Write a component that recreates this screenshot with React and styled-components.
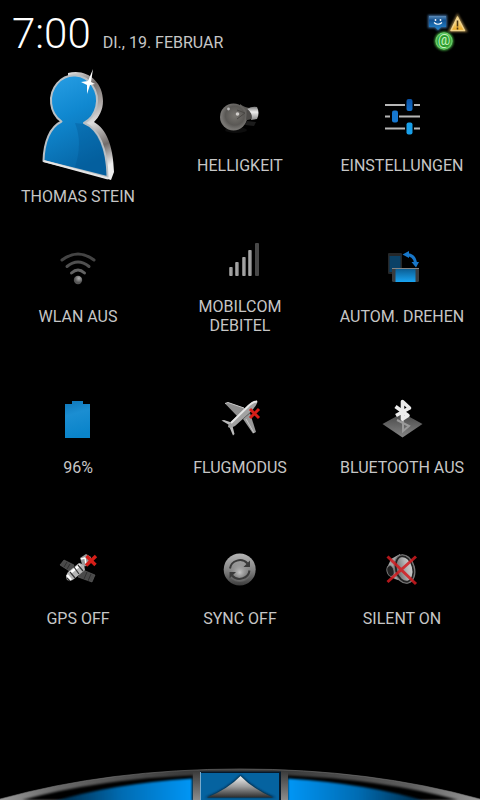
import styled, { createGlobalStyle } from "styled-components";

const GlobalStyle = createGlobalStyle`
  * {
    box-sizing: border-box;
  }

  body {
    margin: 0;
    background: #000;
    color: #c6c6c6;
    font-family: Roboto, "Liberation Sans", sans-serif;
  }
`;

const Screen = styled.div`
  display: flex;
  flex-direction: column;
  min-height: 100vh;
  overflow: hidden;
`;

const StatusBar = styled.header`
  display: flex;
  align-items: flex-start;
  justify-content: space-between;
  height: 63px;
  padding: 8px 12px 0;
`;

const Clock = styled.div`
  display: flex;
  align-items: baseline;
  gap: 12px;
`;

const Time = styled.time`
  color: #fff;
  font-size: 42px;
  font-weight: 300;
  line-height: 52px;
`;

const Day = styled.span`
  font-size: 16px;
`;

const TileGrid = styled.main`
  display: grid;
  grid-template-columns: repeat(3, 1fr);
  grid-auto-rows: 145px;
  gap: 6px;
`;

const Tile = styled.button`
  display: flex;
  flex-direction: column;
  align-items: center;
  justify-content: center;
  gap: ${(props) => (props.$large ? "6px" : "19px")};
  padding: 0;
  border: none;
  background: none;
  color: inherit;
  font-family: inherit;
  cursor: pointer;
`;

const TileIcon = styled.svg`
  flex: none;
  width: ${(props) => (props.$large ? "100px" : "40px")};
  height: ${(props) => (props.$large ? "116px" : "40px")};
  overflow: visible;
`;

const TileLabel = styled.span`
  max-width: 132px;
  font-size: 16px;
  line-height: 19px;
  text-align: center;
`;

const StatusIcons = styled.svg`
  flex: none;
  width: 42px;
  height: 40px;
  margin-top: 4px;
  overflow: visible;
`;

const Handle = styled.button`
  display: block;
  width: 100%;
  margin-top: auto;
  padding: 0;
  border: none;
  background: none;
  cursor: pointer;
`;

const HandleArt = styled.svg`
  display: block;
  width: 100%;
`;

const Notifications = () => (
  <StatusIcons viewBox="0 0 42 40" aria-hidden="true">
    <defs>
      <linearGradient id="chat" x2="0" y2="1">
        <stop offset="0" stopColor="#5d8cb8" />
        <stop offset="0.3" stopColor="#12508f" />
        <stop offset="1" stopColor="#2588d0" />
      </linearGradient>
      <linearGradient id="warn" x2="0" y2="1">
        <stop offset="0" stopColor="#fff2c0" />
        <stop offset="1" stopColor="#e9a51c" />
      </linearGradient>
      <radialGradient id="mail">
        <stop offset="0" stopColor="#3fae3f" />
        <stop offset="0.7" stopColor="#25962b" />
        <stop offset="1" stopColor="#7de07b" />
      </radialGradient>
      <filter id="glow" x="-30%" y="-30%" width="160%" height="160%">
        <feGaussianBlur stdDeviation="1" />
      </filter>
    </defs>
    <path d="M2 3h19v13h-6l-3 3-3-3H2z" fill="#3d6c9c" filter="url(#glow)" />
    <path d="M3 4h17v11h-5l-3 3-3-3H3z" fill="url(#chat)" />
    <circle cx="9.500" cy="8" r="0.900" fill="#fff" />
    <circle cx="14.500" cy="8" r="0.900" fill="#fff" />
    <path d="M8 10.500q4 3.500 8 0" fill="none" stroke="#fff" strokeWidth="1.200" />
    <path d="M31.500 3.500 40 19H23.500z" fill="#8d7442" stroke="#8d7442" strokeWidth="2" filter="url(#glow)" />
    <path d="M31.500 5 38.500 18.500H25z" fill="url(#warn)" stroke="#f0d28a" strokeWidth="1.500" strokeLinejoin="round" />
    <path d="M31.500 8.500v6M31.500 15.500v2" stroke="#4a3410" strokeWidth="1.600" />
    <circle cx="18" cy="29" r="9.500" fill="#43a940" filter="url(#glow)" />
    <circle cx="18" cy="29" r="8.500" fill="url(#mail)" />
    <text x="18" y="33" textAnchor="middle" fontSize="14" fill="#c4f2bd">@</text>
  </StatusIcons>
);

const PersonIcon = () => (
  <TileIcon $large viewBox="0 0 100 116" aria-hidden="true">
    <defs>
      <linearGradient id="personFill" x2="0.3" y2="1">
        <stop offset="0" stopColor="#2aa0e6" />
        <stop offset="0.45" stopColor="#1088d0" />
        <stop offset="1" stopColor="#0666a6" />
      </linearGradient>
      <linearGradient id="personSide" x2="0.2" y2="1">
        <stop offset="0" stopColor="#e8e8e8" />
        <stop offset="0.2" stopColor="#77706e" />
        <stop offset="0.4" stopColor="#a9a3a1" />
        <stop offset="0.55" stopColor="#dedede" />
        <stop offset="0.8" stopColor="#726c6a" />
        <stop offset="1" stopColor="#eee" />
      </linearGradient>
    </defs>
    <path
      d="M40 8C58 3 75 16 75 36c0 9-4 16-9 21 12 7 19 22 20 50l-3 8-10-3L40 60z"
      fill="url(#personSide)"
    />
    <path
      d="M15.500 96C16 77 22 62 33.500 56.500A23 25 0 1 1 56 58C71 64 79 84 79.500 112z"
      fill="url(#personFill)"
      stroke="#b9c0c5"
      strokeWidth="2"
      strokeLinejoin="round"
    />
    <path d="M47 58q8 20 0 44l31.500 9q-1-44-23-52z" fill="#00508b" opacity="0.300" />
    <path d="M15.500 96 80 113.500" fill="none" stroke="#e5e5e5" strokeWidth="2" />
    <path d="m65 4-2 13 4 2-5 1-3 9v-9l-6-3 7-1z" fill="#fff" />
  </TileIcon>
);

const BulbIcon = () => (
  <TileIcon viewBox="0 0 40 40" aria-hidden="true">
    <defs>
      <radialGradient id="glass" cx="0.55" cy="0.45">
        <stop offset="0" stopColor="#77746f" />
        <stop offset="0.7" stopColor="#5a5855" />
        <stop offset="1" stopColor="#777572" />
      </radialGradient>
      <linearGradient id="socket" x2="0" y2="1">
        <stop offset="0" stopColor="#777" />
        <stop offset="0.4" stopColor="#eee" />
        <stop offset="1" stopColor="#888" />
      </linearGradient>
    </defs>
    <ellipse cx="16" cy="33" rx="11" ry="3" fill="#0d0d0d" />
    <path d="M27 24l9 1-2 4-9-1z" fill="#1c1c1c" />
    <path d="M20 7q5 4 11 4v11q-6 0-11 8z" fill="#5b5956" />
    <circle cx="13.500" cy="20" r="13.500" fill="url(#glass)" />
    <path d="M27 12q5-3 10-2 3 6 0 12l-6 1q2-6-4-11z" fill="url(#socket)" />
    <path d="M27 12q6 4 4 10l-5 1z" fill="#4c4a48" />
    <path d="M17 13l8 3-8 6" fill="none" stroke="#494744" />
    <circle cx="8.500" cy="12" r="1.400" fill="#bbb" />
    <circle cx="17.500" cy="17" r="1.800" fill="#d0cdca" />
  </TileIcon>
);

const SlidersIcon = () => (
  <TileIcon viewBox="0 0 40 40" aria-hidden="true">
    <defs>
      <linearGradient id="knob" x2="0" y2="1">
        <stop offset="0" stopColor="#0950a4" />
        <stop offset="1" stopColor="#1270cb" />
      </linearGradient>
    </defs>
    <path d="M3 8h20M32 8h6M3 19.500h5M17 19.500h21M3 31.500h20M32 31.500h6" stroke="#b7b7b7" strokeWidth="1.800" />
    <rect x="24.500" y="2" width="6" height="12" rx="2" fill="url(#knob)" />
    <rect x="10" y="13.500" width="6" height="12" rx="2" fill="#1677cf" />
    <rect x="24.500" y="25.500" width="6" height="12" rx="2" fill="#189fe9" />
  </TileIcon>
);

const WifiIcon = () => (
  <TileIcon viewBox="0 0 40 40" aria-hidden="true">
    <defs>
      <radialGradient id="wifiDot" cx="0.6" cy="0.3">
        <stop offset="0" stopColor="#b0b0b0" />
        <stop offset="1" stopColor="#555" />
      </radialGradient>
    </defs>
    <g fill="none" strokeWidth="3" strokeLinecap="round">
      <path d="M4 12q16-12 32 0" stroke="#444" />
      <path d="M9 18.500q11-9 22 0" stroke="#505050" />
      <path d="M13.500 25q6.500-6 13 0" stroke="#626262" />
    </g>
    <circle cx="20" cy="32" r="4.200" fill="url(#wifiDot)" />
  </TileIcon>
);

const SignalIcon = () => (
  <TileIcon viewBox="0 0 40 40" aria-hidden="true">
    <defs>
      <linearGradient id="bar">
        <stop offset="0" stopColor="#6c6c6c" />
        <stop offset="0.5" stopColor="#b8b8b8" />
        <stop offset="1" stopColor="#4c4c4c" />
      </linearGradient>
    </defs>
    <g fill="url(#bar)">
      <rect x="9" y="29" width="4" height="9" rx="1" />
      <rect x="15" y="24" width="4" height="14" rx="1" />
      <rect x="22" y="19" width="4" height="19" rx="1" />
      <rect x="28" y="12" width="4" height="26" rx="1" />
    </g>
    <rect x="35" y="5" width="4" height="33" rx="1" fill="#484848" />
  </TileIcon>
);

const RotateIcon = () => (
  <TileIcon viewBox="0 0 40 40" aria-hidden="true">
    <defs>
      <linearGradient id="phone" x2="0" y2="1">
        <stop offset="0" stopColor="#0b5d93" />
        <stop offset="1" stopColor="#19a4f2" />
      </linearGradient>
    </defs>
    <rect x="6" y="5" width="14" height="21" rx="1" fill="#252729" />
    <rect x="7.500" y="8" width="11" height="16" fill="#0b4166" />
    <rect x="10" y="20" width="27" height="14" rx="1.500" fill="#3a3c3e" />
    <path d="M10 20.500h27" stroke="#858585" />
    <rect x="13.500" y="21" width="20" height="13" fill="url(#phone)" />
    <path d="M24 6.500q8 0 9.500 8" fill="none" stroke="#1877c9" strokeWidth="3" />
    <path d="M20.500 6.500 27 3v7zM29.500 14H37l-3 5.500z" fill="#1877c9" />
  </TileIcon>
);

const BatteryIcon = () => (
  <TileIcon viewBox="0 0 40 40" aria-hidden="true">
    <defs>
      <linearGradient id="cell" x2="0.2" y2="1">
        <stop offset="0" stopColor="#0f76b8" />
        <stop offset="0.4" stopColor="#1b8ed2" />
        <stop offset="1" stopColor="#0a84ca" />
      </linearGradient>
    </defs>
    <path d="M7 5h7V2h11v3h7v34H7z" fill="url(#cell)" />
  </TileIcon>
);

const PlaneIcon = () => (
  <TileIcon viewBox="0 0 40 40" aria-hidden="true">
    <path d="M5 4.500 8 3.500 27 10 18 18z" fill="#8e8e8e" />
    <path d="M5 4.500 8 3.500 24 9" fill="none" stroke="#ccc" />
    <path d="M30 14 36 33l-3 1.500L23 20z" fill="#999" />
    <path d="m26 20 8 14" stroke="#c8c8c8" />
    <path d="M1.500 21.500 4 21l9 3-2 3zM12 25l2.500 10-1.500 1.500L9 27z" fill="#bbb" />
    <path d="M37.500 2q0 4-8 12L15 27q-5 3-7 1 0-3 4-6L28 6q7-5 9.500-4z" fill="#a2a2a2" />
    <path d="M37 2.500q-4 0-9 5L11 24" fill="none" stroke="#e5e5e5" strokeWidth="2" />
    <path d="m30 10 9 9M39 10l-9 9" stroke="#d51e18" strokeWidth="3" />
  </TileIcon>
);

const BluetoothIcon = () => (
  <TileIcon viewBox="0 0 40 40" aria-hidden="true">
    <defs>
      <linearGradient id="base" x2="0" y2="1">
        <stop offset="0" stopColor="#444" />
        <stop offset="1" stopColor="#858585" />
      </linearGradient>
    </defs>
    <path d="M20.500 14 40.500 25l-20 13.500L.5 25z" fill="url(#base)" />
    <path d="m15 21 12 6-6 5V20" fill="none" stroke="#9a9a9a" strokeWidth="2" />
    <path
      d="m13.500 7.500 12.500 9L20.500 20V2.500L27.500 9 14 16.500"
      fill="none"
      stroke="#ececec"
      strokeWidth="3.600"
      strokeLinejoin="round"
    />
  </TileIcon>
);

const SatelliteIcon = () => (
  <TileIcon viewBox="0 0 40 40" aria-hidden="true">
    <path d="m6 10 10 5-3 7-11-7z" fill="#4a4a4a" stroke="#666" strokeWidth="0.600" />
    <path d="m25 20 12 5-3 7-14-5z" fill="#4a4a4a" stroke="#666" strokeWidth="0.600" />
    <path d="m9 12-3 5M12 14l-3 5M29 22l-3 7M33 24l-3 7" stroke="#303030" />
    <path d="m22 8 6-4 5 3-2 8-6 2z" fill="#999" />
    <path d="m23 9 4-1 1 6" fill="none" stroke="#fff" strokeWidth="1.500" />
    <path d="M21 13q6 1 6 7L16 29q-3 3-7 1-2-4 1-8z" fill="#b5b5b5" />
    <path d="m12 23 10-8M9 25l4 5" stroke="#fff" strokeWidth="2.500" />
    <path d="m16 17 5 7M20 15l5 6M12 22l5 6M9 28l3 3" stroke="#333" strokeWidth="1.200" />
    <path d="m28.500 6 9 9M38 6l-10 9.500" stroke="#d51e18" strokeWidth="3.400" />
  </TileIcon>
);

const SyncIcon = () => (
  <TileIcon viewBox="0 0 40 40" aria-hidden="true">
    <defs>
      <linearGradient id="disc" x2="0" y2="1">
        <stop offset="0" stopColor="#b5b5b5" />
        <stop offset="0.5" stopColor="#858585" />
        <stop offset="1" stopColor="#3c3c3c" />
      </linearGradient>
      <radialGradient id="discShine" cy="0.6">
        <stop offset="0" stopColor="#c4c4c4" />
        <stop offset="1" stopColor="#888" stopOpacity="0" />
      </radialGradient>
    </defs>
    <circle cx="19.700" cy="19.500" r="16" fill="url(#disc)" />
    <circle cx="19.700" cy="20" r="12" fill="url(#discShine)" />
    <g fill="none" stroke="#3a3a3a" strokeWidth="2">
      <path d="M10 18.500a10 9.500 0 0 1 17.500-5" />
      <path d="M29.500 20.500a10 9.500 0 0 1-17.500 5" />
    </g>
    <path d="M30 10.500v6.500h-6.500z" fill="#3a3a3a" />
    <path d="M9.500 28.500V22H16z" fill="#3a3a3a" />
  </TileIcon>
);

const SilentIcon = () => (
  <TileIcon viewBox="0 0 40 40" aria-hidden="true">
    <defs>
      <linearGradient id="cone">
        <stop offset="0" stopColor="#5c5c5c" />
        <stop offset="0.6" stopColor="#b5b5b5" />
        <stop offset="1" stopColor="#d5d5d5" />
      </linearGradient>
    </defs>
    <path d="M5 18 9 9 18 4l4 28-9-3q-8-3-8-11z" fill="#a2a2a2" />
    <ellipse cx="8.500" cy="21" rx="3.500" ry="5.500" fill="#222" stroke="#777" transform="rotate(-15 8.500 21)" />
    <ellipse
      cx="22.500"
      cy="19"
      rx="10"
      ry="14.500"
      fill="url(#cone)"
      stroke="#777"
      strokeWidth="1.200"
      transform="rotate(-15 22.500 19)"
    />
    <ellipse
      cx="22.500"
      cy="19"
      rx="8.500"
      ry="13"
      fill="none"
      stroke="#232323"
      strokeWidth="1.800"
      transform="rotate(-15 22.500 19)"
    />
    <path d="M5.500 6.500 34 34M34 6.500 5.500 32" stroke="#d41c20" strokeWidth="3" opacity="0.850" />
  </TileIcon>
);

const tiles = [
  { label: "THOMAS STEIN", icon: PersonIcon, large: true },
  { label: "HELLIGKEIT", icon: BulbIcon },
  { label: "EINSTELLUNGEN", icon: SlidersIcon },
  { label: "WLAN AUS", icon: WifiIcon },
  { label: "MOBILCOM DEBITEL", icon: SignalIcon },
  { label: "AUTOM. DREHEN", icon: RotateIcon },
  { label: "96%", icon: BatteryIcon },
  { label: "FLUGMODUS", icon: PlaneIcon },
  { label: "BLUETOOTH AUS", icon: BluetoothIcon },
  { label: "GPS OFF", icon: SatelliteIcon },
  { label: "SYNC OFF", icon: SyncIcon },
  { label: "SILENT ON", icon: SilentIcon },
];

const PanelHandle = () => (
  <Handle type="button" aria-label="Schließen">
    <HandleArt viewBox="0 0 480 32" aria-hidden="true">
      <defs>
        <linearGradient id="rim">
          <stop offset="0" stopColor="#999" />
          <stop offset="0.12" stopColor="#686868" />
          <stop offset="0.38" stopColor="#3c3c3c" />
          <stop offset="0.6" stopColor="#3c3c3c" />
          <stop offset="0.85" stopColor="#5c5c5c" />
          <stop offset="1" stopColor="#999" />
        </linearGradient>
        <linearGradient id="wingLeft">
          <stop offset="0.05" stopColor="#002c4a" />
          <stop offset="0.5" stopColor="#006cb3" />
          <stop offset="1" stopColor="#0696f6" />
        </linearGradient>
        <linearGradient id="wingRight" x1="1" x2="0">
          <stop offset="0.05" stopColor="#002c4a" />
          <stop offset="0.5" stopColor="#006cb3" />
          <stop offset="1" stopColor="#0696f6" />
        </linearGradient>
        <linearGradient id="post" x2="0" y2="1">
          <stop offset="0" stopColor="#3a3a3a" />
          <stop offset="1" stopColor="#8c8c8c" />
        </linearGradient>
        <linearGradient id="arrow" x2="0" y2="1">
          <stop offset="0" stopColor="#f2f2f2" />
          <stop offset="0.5" stopColor="#9c9c9c" />
          <stop offset="1" stopColor="#2c2c2c" />
        </linearGradient>
        <filter id="soft">
          <feGaussianBlur stdDeviation="1" />
        </filter>
      </defs>
      <path d="M0 31Q110 1 240 1t240 30v1H0z" fill="url(#rim)" />
      <path d="M0 31Q110 1 240 1t240 30" fill="none" stroke="#777" opacity="0.600" />
      <path d="M22 32Q100 11 193 7.500V32zM458 32Q380 11 287 7.500V32z" fill="#000" filter="url(#soft)" />
      <path d="M52 34Q110 16 192 10.500V34z" fill="url(#wingLeft)" filter="url(#soft)" />
      <path d="M428 34Q370 16 288 10.500V34z" fill="url(#wingRight)" filter="url(#soft)" />
      <path d="M193 3h8v29h-8zM280 3h8v29h-8z" fill="url(#post)" />
      <rect x="200" y="3.500" width="81" height="29" fill="#05182a" />
      <rect x="201" y="5" width="78" height="27" fill="#0563a0" />
      <path d="M200.500 4v28" stroke="#79aacb" />
      <path d="M240.500 7Q226 22 205 29.500h71Q255 22 240.500 7z" fill="#022238" filter="url(#soft)" />
      <path d="M240.500 8Q228 21 207 29.500h66Q253 21 240.500 8z" fill="url(#arrow)" />
    </HandleArt>
  </Handle>
);

const App = () => {
  return (
    <Screen>
      <GlobalStyle />
      <StatusBar>
        <Clock>
          <Time>7:00</Time>
          <Day>DI., 19. FEBRUAR</Day>
        </Clock>
        <Notifications />
      </StatusBar>
      <TileGrid>
        {tiles.map(({ label, icon: Icon, large }) => (
          <Tile key={label} type="button" $large={large}>
            <Icon />
            <TileLabel>{label}</TileLabel>
          </Tile>
        ))}
      </TileGrid>
      <PanelHandle />
    </Screen>
  );
};

export default App;
